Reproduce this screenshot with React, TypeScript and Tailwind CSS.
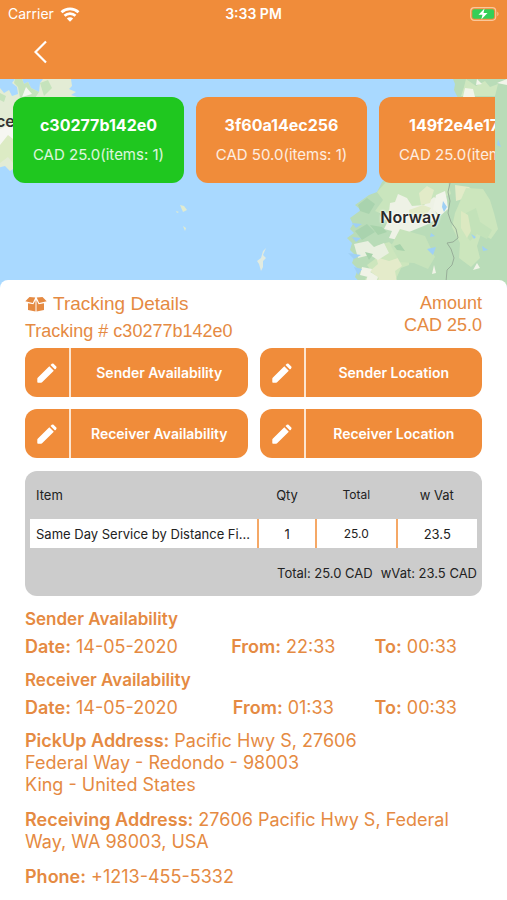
const packages = [
  { id: "c30277b142e0", summary: "CAD 25.0(items: 1)", active: true },
  { id: "3f60a14ec256", summary: "CAD 50.0(items: 1)", active: false },
  { id: "149f2e4e17b0", summary: "CAD 25.0(items: 1)", active: false },
];

const actions = ["Sender Availability", "Sender Location", "Receiver Availability", "Receiver Location"];

const availability = [
  { title: "Sender Availability", date: "14-05-2020", from: "22:33", to: "00:33" },
  { title: "Receiver Availability", date: "14-05-2020", from: "01:33", to: "00:33" },
];

function BoxIcon() {
  return (
    <svg className="w-[22px] h-4" viewBox="0 0 22 16" fill="currentColor" aria-hidden="true">
      <path d="M4.500 1 10.300 1.400 7.800 7 .3 5.300z" />
      <path d="M17.500 1 11.700 1.400 14.200 7 21.700 5.300z" />
      <path d="M3 7.200 8.400 8.300 10.500 4V15.500L3 14z" />
      <path d="M19 7.200 13.600 8.300 11.500 4V15.500L19 14z" />
    </svg>
  );
}

function PencilIcon() {
  return (
    <svg className="w-5 h-5" viewBox="0 0 20 20" fill="currentColor" aria-hidden="true">
      <path d="M12.300 3.200 16.800 7.700 5.100 19.300Q4.700 19.700 4.200 19.700H1Q.3 19.700.3 19V15.800Q.3 15.300.7 14.800z" />
      <path d="M13.500 2 14.800.8Q15.700 0 16.600.8L19.200 3.400Q20 4.300 19.200 5.200L18 6.500z" />
    </svg>
  );
}

function StatusBar() {
  return (
    <div className="grid grid-cols-3 items-center h-7 px-2 text-sm">
      <div className="flex items-center gap-1.5">
        <span>Carrier</span>
        <svg className="w-5 h-[15px]" viewBox="0 0 19 15" fill="none" stroke="currentColor" strokeWidth="2.8">
          <path d="M1 5.2C5.8.7 13.2.7 18 5.2" />
          <path d="M4 8.800c3.200-2.900 7.800-2.900 11 0" />
          <path d="M6.300 11.400c1.900-1.600 4.500-1.600 6.400 0L9.500 14.800z" fill="currentColor" stroke="none" />
        </svg>
      </div>
      <span className="text-center font-semibold">3:33 PM</span>
      <svg className="justify-self-end w-[30px] h-[14px]" viewBox="0 0 30 14" fill="none">
        <rect x="1.7" y="0.7" width="25" height="12.6" rx="3.5" stroke="#fbc79a" strokeWidth="1.2" />
        <rect x="3.3" y="2.3" width="21.8" height="9.4" rx="2" fill="#34cf57" />
        <path d="M28.3 4.8c1.6.6 1.6 3.8 0 4.4z" fill="#fbc79a" />
        <path d="M15.5 1.500 9.500 7.800h4L12.300 12.500 18.500 6h-4z" fill="#fff" />
      </svg>
    </div>
  );
}

function MapBackground() {
  return (
    <svg className="absolute inset-0 w-full h-full" viewBox="0 0 507 209" preserveAspectRatio="xMidYMin slice" aria-hidden="true">
      <rect width="507" height="209" fill="#a9d9ff" />

      {/* Iceland */}
      <path d="M0 9l4 5 5-3 3 6 6-2-1-7-5-4 3-4h7l2 5 4-2 3 6 8 4 1-9 3-4h28l1 7-3 3 7 3-5 3 6 2-20 44-47 30-5-5-8 2z" fill="#e3ecd5" />
      <path d="M15 0h7l2 5 4-2 3 6 8 4-4 6H20l-2-11-4-4zM40 4l8-3 4 8-8 8zM0 14l6 3-2 6-4-2z" fill="#c5e3bc" />
      <path d="M26 8l6 7-10 3zM0 50l13-6v20L4 75l-4-4z" fill="#f6f7f2" />
      <path d="M0 66l8-10 5 4v24l-5-6-8 6z" fill="#dcebc4" />

      {/* Faroe and Shetland islands */}
      <path d="M180 126l4 1 3 4-4 2zM176 132l3 1-2 1zM183 147l3 2-1 3z" fill="#e1ebcf" />
      <path d="M266 169l-3 7 3 3-3 3v6l-2 4-2-7-2-3 4-3 2-7z" fill="#e1ebe0" />

      {/* Scandinavia */}
      <path d="M453 0l2 5-1 6 4 8-6 12-30 40-40 32-5 10-8 3-14 10 6 5-11 8 3 6-3 5 4 4-7 5 5 5-2 7 5 5-3 8 6 6-3 8 8 9h146V0z" fill="#b9dcb8" />
      <path d="M466 0l10 7 9-5 5 6 8-3-3 12h-34l3-9z" fill="#cfe7c0" />
      <path d="M465 9l8 1 2 8h-12zM497 4l10-4v6zM477 0l5 5-6 1z" fill="#f2f5ea" />
      <path d="M386 103h62l3 12-8 4-10 12-20 4-16-7-8 10-14-6 8-11-6-8z" fill="#c9e5bd" />
      <path d="M398 115l9 4 5 8 12-1 10-8 7 5-6 8 3 8-12 7-17 7-11 8-9-2 3-7-8-2 4-8-8-4 9-5 1-9 5-1z" fill="#eef2e6" />
      <path d="M419 114l8-7 7 4-4 13-9 2zM409 131l14-5 8 3-8 11-14-3zM455 106l14 2 14 14-7 5-10-8-10 3z" fill="#e2ebc8" />
      <path d="M466 109l17 1 7 11 4 13 4 16-7 10-10-5-4 12 3 12-9 9-12-9 1-15-8-16 3-14z" fill="#cce6bd" />
      <path d="M466 134l10-5 4 14 12 8-5 9-10-5-7 7-7-10z" fill="#c3e2b9" />
      <path d="M461 132l7 4 3 16-4 7-6-10z" fill="#dce9c1" />
      <path d="M358 126l9-7 8 6-6 10-9-3zM355 152l12-7 8 8-13 8z" fill="#a9d3ae" />
      <path d="M376 167l13-4 9 8 12 4-1 11-8 3-5 11 3 9h-31l-3-9 7-7-5-7 8-6z" fill="#cde6bd" />
      <path d="M376 178l13 4 9-3 4 8-7 5 2 11-4 6h-18l4-10-9-7 8-7z" fill="#e4ebca" />
      <path d="M354 165l14-3 6 6 10-4 5 10-11 7-8-5-12 3z" fill="#e9f0e0" />
      <path d="M362 188l10 2-4 8-8-2zM369 192l9 6-4 11h-10zM434 186l2 8-4 1zM477 184l3 5-7 2z" fill="#f0f3e7" />
      <path d="M400 150l25 7 10 21-7 12-14-6-14-1-9-16z" fill="#c6e3bb" />
      <path d="M436 116l9-4 2 9 1 9-8 7-7-7z" fill="#f1f4ea" />
      <path d="M443 122l4 6-3 5-2-5zM427 170l9-2-3 8zM431 154l4 3-5 1zM471 155l5 3-2 2zM485 59l6 9-5 4zM498 60l3 8-4-2zM361 159l-9-1 4 5zM352 144l10 1-6 4zM348 174l13 2-7 4zM354 188l8 2-4 6zM482 167l6 4-5 1z" fill="#9fd0f5" />
      <path d="M370 146l12 2 5 5-9 3zM379 134l8 3-5 5zM394 167l6-2 5 7-8-1zM365 173l8 2-4 6z" fill="#a8d3ab" />
      <path d="M450 104l-2 9 2 9-2 12 3 9 5 7 2 9-5 4-6 1 4 6 3 9-2 7-5 5-1 12-2 6" fill="none" stroke="#98ae99" strokeWidth="1" />
    </svg>
  );
}

function PackageCards() {
  return (
    <div className="relative ml-[13px] mr-3 pt-[18px] flex gap-3 overflow-x-auto [scrollbar-width:none]">
      {packages.map((p) => (
        <button
          key={p.id}
          type="button"
          className={
            p.active
              ? "shrink-0 w-[171px] h-[86px] rounded-xl bg-[#1fc71f] text-white flex flex-col items-center justify-center gap-2.5"
              : "shrink-0 w-[171px] h-[86px] rounded-xl bg-[#f08c3a] text-white flex flex-col items-center justify-center gap-2.5"
          }
        >
          <span className="text-base leading-5 font-bold">{p.id}</span>
          <span className="text-[15px] leading-5 text-white/85">{p.summary}</span>
        </button>
      ))}
    </div>
  );
}

function ItemsTable() {
  return (
    <div className="mt-[13px] px-[5px] pb-[13px] rounded-xl bg-[#cccccc] text-[13px] leading-5 text-[#222222]">
      <table className="w-full table-fixed border-collapse">
        <thead>
          <tr className="h-12">
            <th className="w-[51%] pl-1.5 text-left font-normal">Item</th>
            <th className="w-[13%] font-normal">Qty</th>
            <th className="w-[18%] text-xs font-normal">Total</th>
            <th className="w-[18%] font-normal">w Vat</th>
          </tr>
        </thead>
        <tbody>
          <tr className="h-[29px] bg-white text-center">
            <td className="pl-1.5 text-left whitespace-nowrap">Same Day Service by Distance Fi...</td>
            <td className="border-l-2 border-[#f5a866]">1</td>
            <td className="border-l-2 border-[#f5a866] text-xs">25.0</td>
            <td className="border-l-2 border-[#f5a866]">23.5</td>
          </tr>
        </tbody>
      </table>
      <div className="flex justify-end gap-2 pt-[15px]">
        <span>Total: 25.0 CAD</span>
        <span>wVat: 23.5 CAD</span>
      </div>
    </div>
  );
}

export default function App() {
  return (
    <div className="min-h-screen bg-white font-['Inter',sans-serif]">
      <header className="h-[79px] bg-[#f08c3a] text-white">
        <StatusBar />
        <button type="button" aria-label="Back" className="ml-7 mt-2.5 px-1.5">
          <svg className="w-[13px] h-7" viewBox="0 0 13 28" fill="none" stroke="currentColor" strokeWidth="2.2">
            <path d="M12 3.500 1.500 14 12 24.500" />
          </svg>
        </button>
      </header>

      {/* Map */}
      <section className="relative h-[209px] overflow-hidden">
        <MapBackground />
        <span className="absolute -left-1 top-[30px] text-base font-semibold text-[#333333]">ce</span>
        <span className="absolute left-[75%] top-[126px] text-base font-semibold text-[#2a2a2a] [text-shadow:0_0_2px_white,0_0_3px_white]">
          Norway
        </span>
        <PackageCards />
      </section>

      {/* Details */}
      <main className="relative -mt-2 px-[25px] pt-3 pb-3 rounded-t-lg bg-white text-[#e58a42]">
        <div className="flex justify-between font-['Liberation_Sans',sans-serif] text-lg leading-[22px]">
          <div>
            <h1 className="flex items-center gap-1.5 text-[19px] leading-6">
              <BoxIcon />
              Tracking Details
            </h1>
            <p className="mt-1">Tracking # c30277b142e0</p>
          </div>
          <div className="text-right">
            <p>Amount</p>
            <p>CAD 25.0</p>
          </div>
        </div>

        <div className="mt-1.5 grid grid-cols-2 gap-3">
          {actions.map((label) => (
            <button key={label} type="button" className="flex h-[49px] rounded-xl bg-[#f08c3a] text-white">
              <span className="flex items-center justify-center w-[46px] h-full border-r-2 border-[#fde5cf]">
                <PencilIcon />
              </span>
              <span className="flex-1 self-center text-sm font-semibold">{label}</span>
            </button>
          ))}
        </div>

        <ItemsTable />

        <div className="mt-3 text-lg leading-[22px]">
          {availability.map((a) => (
            <section key={a.title} className="mb-[11px]">
              <h2 className="text-[17px] leading-[22px] font-semibold">{a.title}</h2>
              <div className="mt-1.5 grid grid-cols-[1.45fr_1fr_1fr]">
                <p><b className="font-semibold">Date:</b> {a.date}</p>
                <p className="text-center"><b className="font-semibold">From:</b> {a.from}</p>
                <p className="text-center"><b className="font-semibold">To:</b> {a.to}</p>
              </div>
            </section>
          ))}
          <p>
            <b className="font-semibold">PickUp Address:</b> Pacific Hwy S, 27606<br />
            Federal Way - Redondo - 98003<br />
            King - United States
          </p>
          <p className="mt-[13px]">
            <b className="font-semibold">Receiving Address:</b> 27606 Pacific Hwy S, Federal<br />
            Way, WA 98003, USA
          </p>
          <p className="mt-[13px]"><b className="font-semibold">Phone:</b> +1213-455-5332</p>
        </div>
      </main>
    </div>
  );
}
